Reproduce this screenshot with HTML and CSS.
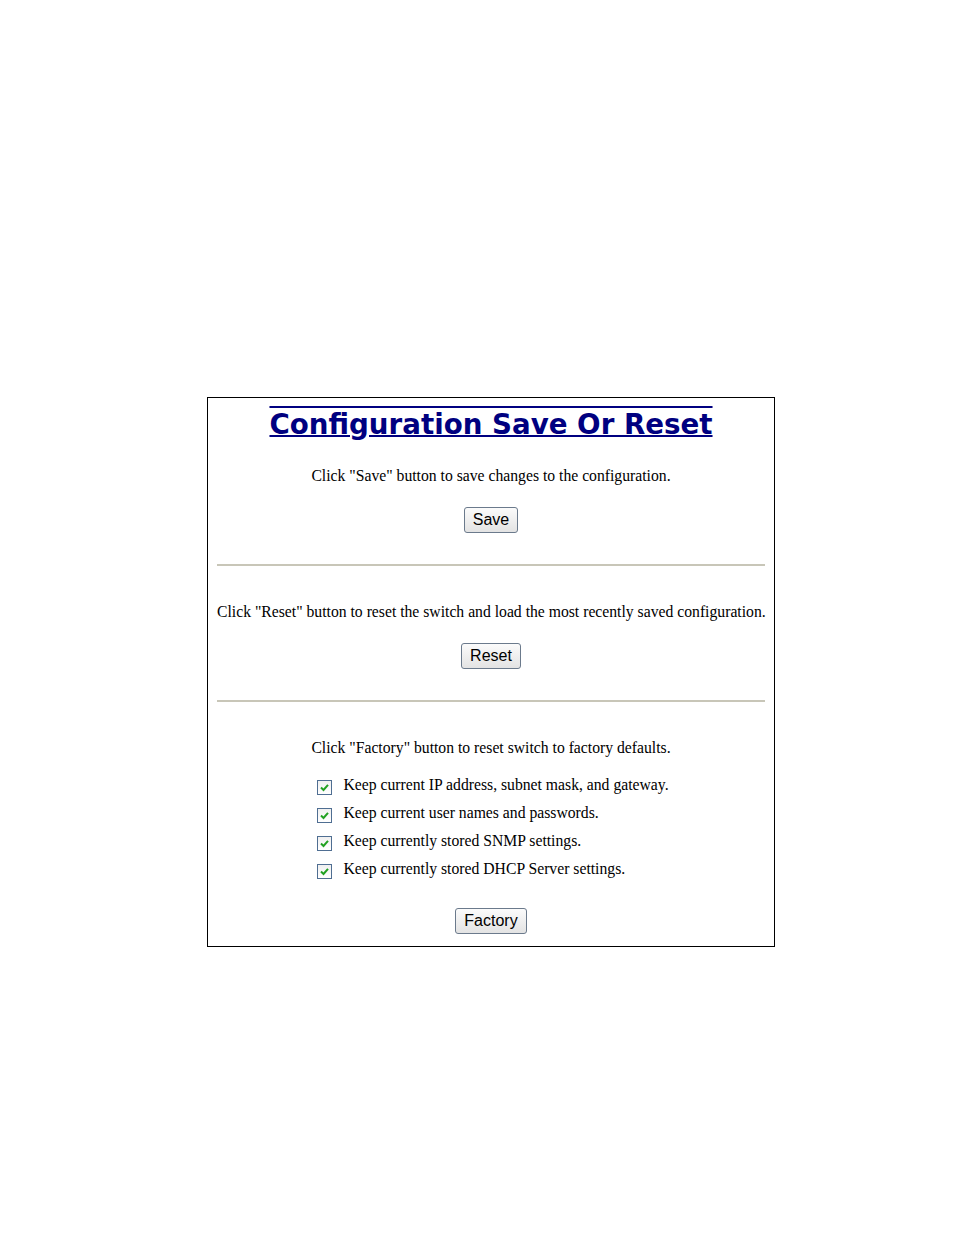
FILE: index.html
```html
<!DOCTYPE html>
<html lang="en">
<head>
    <meta charset="UTF-8">
    <title>Configuration Save Or Reset</title>
    <link rel="stylesheet" href="styles.css">
</head>
<body>
    <div class="panel">
        <h1>Configuration Save Or Reset</h1>

        <p class="note note-save">Click "Save" button to save changes to the configuration.</p>
        <button class="btn">Save</button>
        <hr>

        <p class="note note-reset">Click "Reset" button to reset the switch and load the most recently saved configuration.</p>
        <button class="btn">Reset</button>
        <hr>

        <p class="note note-factory">Click "Factory" button to reset switch to factory defaults.</p>
        <div class="keep-list">
            <label class="keep"><span class="check"><svg viewBox="0 0 13 13" width="13" height="13"><path d="M3 6.5 L5.5 9 L10 3.8" fill="none" stroke="#21a121" stroke-width="2"/></svg></span>Keep current IP address, subnet mask, and gateway.</label>
            <label class="keep"><span class="check"><svg viewBox="0 0 13 13" width="13" height="13"><path d="M3 6.5 L5.5 9 L10 3.8" fill="none" stroke="#21a121" stroke-width="2"/></svg></span>Keep current user names and passwords.</label>
            <label class="keep"><span class="check"><svg viewBox="0 0 13 13" width="13" height="13"><path d="M3 6.5 L5.5 9 L10 3.8" fill="none" stroke="#21a121" stroke-width="2"/></svg></span>Keep currently stored SNMP settings.</label>
            <label class="keep"><span class="check"><svg viewBox="0 0 13 13" width="13" height="13"><path d="M3 6.5 L5.5 9 L10 3.8" fill="none" stroke="#21a121" stroke-width="2"/></svg></span>Keep currently stored DHCP Server settings.</label>
        </div>
        <button class="btn btn-factory">Factory</button>
    </div>
</body>
</html>
```

FILE: styles.css
```css
body {
    margin: 0;
    background: #ffffff;
    font-family: 'Liberation Serif', serif;
    color: #000000;
}
.panel {
    box-sizing: border-box;
    width: 568px;
    height: 550px;
    margin: 397px 0 0 207px;
    padding: 0 9px;
    border: 1px solid #000000;
    text-align: center;
}
h1 {
    display: inline-block;
    margin: 10px 0 0;
    font-family: 'DejaVu Sans', Verdana, sans-serif;
    font-weight: bold;
    font-size: 27.7px;
    line-height: 33px;
    color: #000080;
    text-decoration: underline overline;
    text-decoration-thickness: 2px;
}
.note {
    margin: 0;
    font-size: 15.7px;
    line-height: 18px;
    white-space: nowrap;
}
.note-save {
    margin-top: 26px;
}
.note-reset {
    margin-top: 37px;
}
.note-factory {
    margin-top: 37px;
}
.btn {
    display: block;
    margin: 22px auto 0;
    padding: 0 8px;
    height: 26px;
    font-family: 'Liberation Sans', Arial, sans-serif;
    font-size: 16px;
    color: #000000;
    background: linear-gradient(#fbfbfb, #e3e3e3);
    border: 1px solid #6b7a8c;
    border-radius: 3px;
}
hr {
    margin: 31px 0 0;
    height: 0;
    border: none;
    border-top: 2px solid #c8c6b8;
}
.keep-list {
    display: inline-block;
    margin: 14px 0 0 4px;
    text-align: left;
}
.keep {
    display: flex;
    align-items: center;
    height: 28px;
    font-size: 15.7px;
}
.check {
    display: inline-flex;
    box-sizing: border-box;
    width: 15px;
    height: 15px;
    margin: 4px 11px 0 0;
    border: 1px solid #4f6e92;
    background: linear-gradient(#f0f0f0, #ffffff);
}
.check svg {
    display: block;
}
.btn-factory {
    margin-top: 25px;
}
```
